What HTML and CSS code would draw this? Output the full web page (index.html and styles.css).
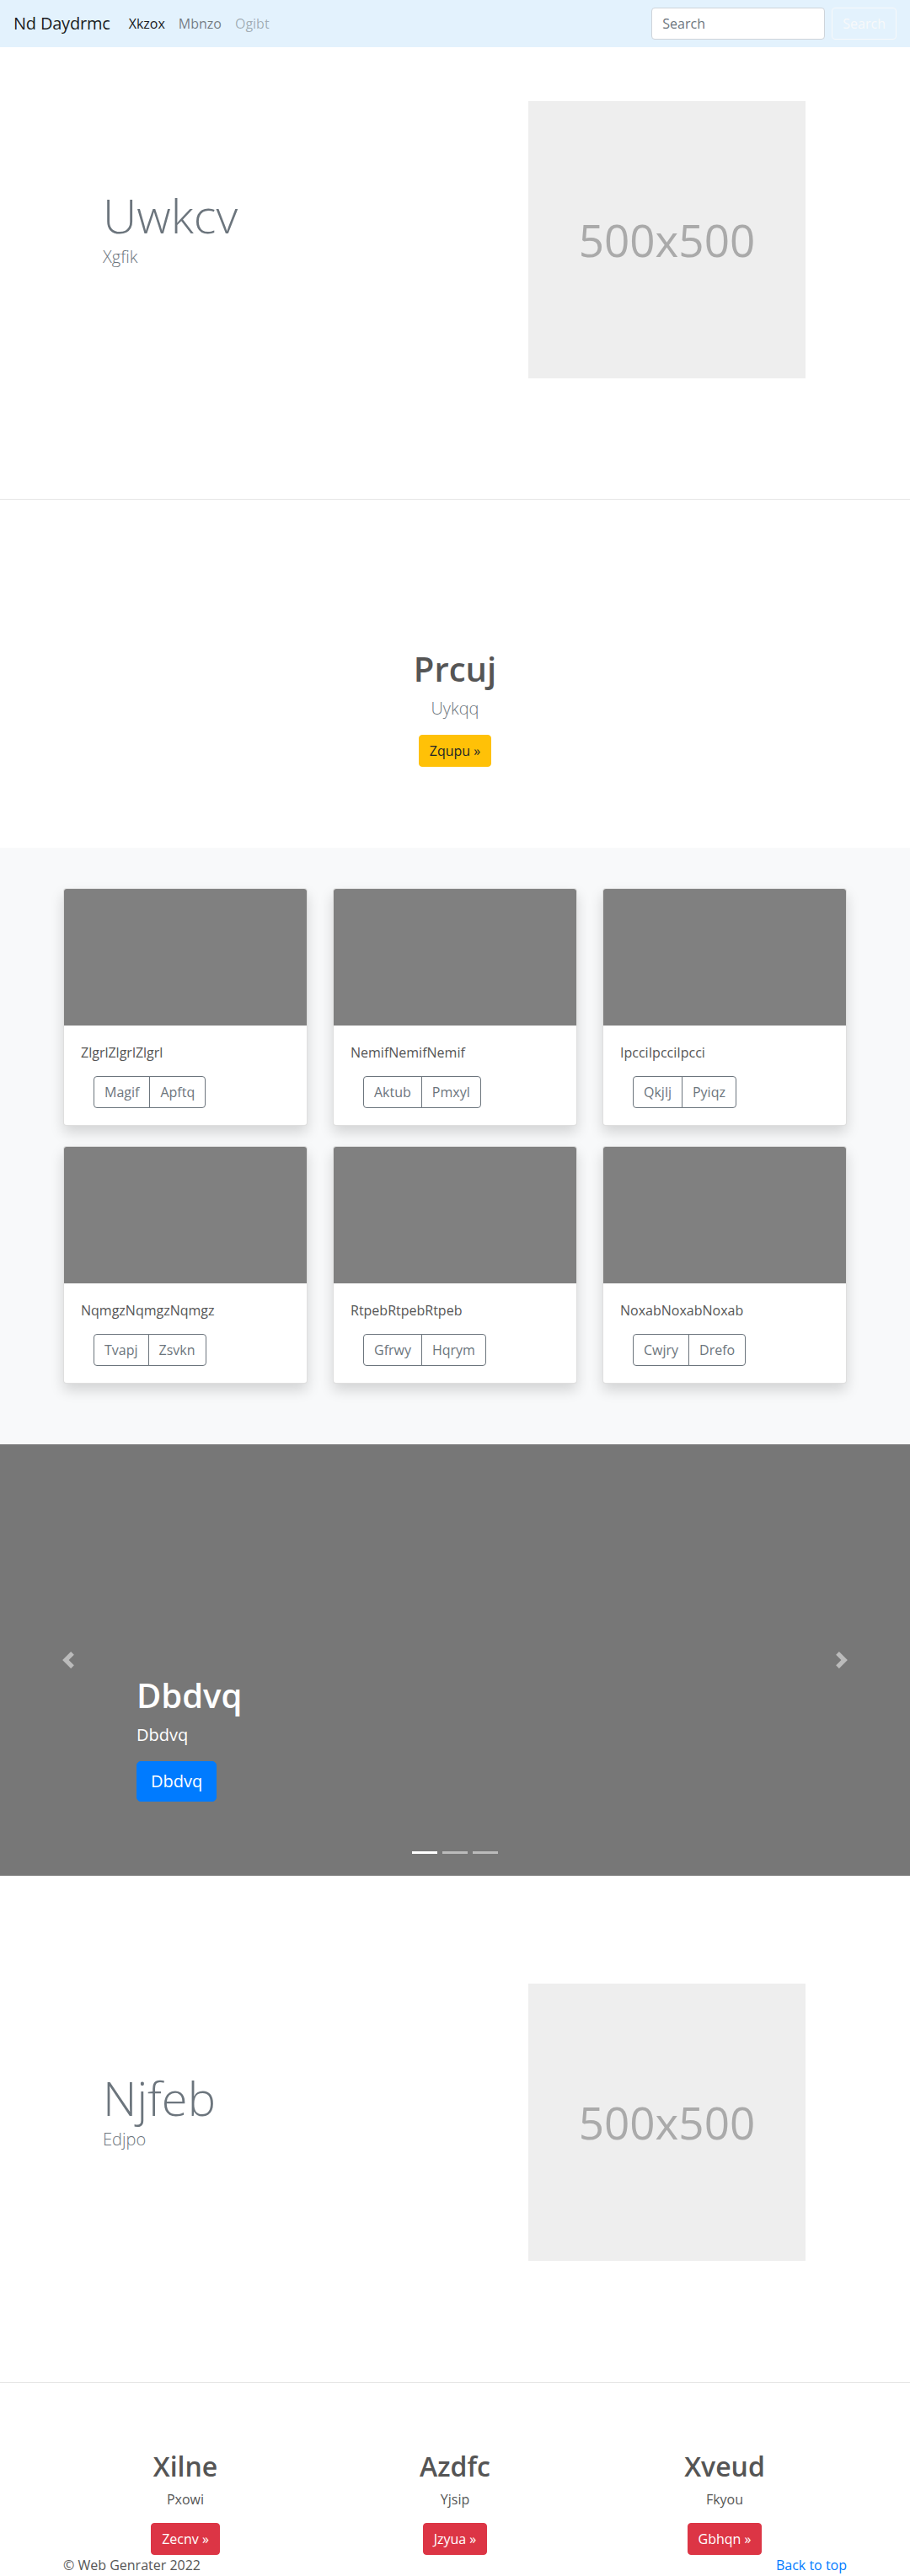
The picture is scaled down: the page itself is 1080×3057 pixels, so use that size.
FILE: index.html
```html
<!DOCTYPE html>
<html lang="en">
<head>
<meta charset="utf-8">
<title>Nd Daydrmc</title>
<link rel="stylesheet" href="styles.css">
</head>
<body>
<nav class="navbar">
  <a class="brand" href="#">Nd Daydrmc</a>
  <ul class="nav-links">
    <li><a class="nav-link active" href="#">Xkzox</a></li>
    <li><a class="nav-link" href="#">Mbnzo</a></li>
    <li><a class="nav-link disabled" href="#">Ogibt</a></li>
  </ul>
  <form class="search">
    <input class="search-input" type="search" placeholder="Search">
    <button class="btn btn-outline-light" type="button">Search</button>
  </form>
</nav>

<section class="feature feature-top">
  <div class="container feature-row">
    <div class="feature-text">
      <h1 class="display">Uwkcv</h1>
      <p class="lead">Xgfik</p>
    </div>
    <div class="placeholder">500x500</div>
  </div>
</section>

<section class="intro">
  <h1 class="intro-title">Prcuj</h1>
  <p class="lead intro-lead">Uykqq</p>
  <a class="btn btn-warning" href="#">Zqupu »</a>
</section>

<section class="album">
  <div class="container card-grid">
    <div class="card">
      <div class="card-img"></div>
      <div class="card-body">
        <p class="card-text">ZlgrlZlgrlZlgrl</p>
        <div class="btn-group"><a class="btn btn-outline" href="#">Magif</a><a class="btn btn-outline" href="#">Apftq</a></div>
      </div>
    </div>
    <div class="card">
      <div class="card-img"></div>
      <div class="card-body">
        <p class="card-text">NemifNemifNemif</p>
        <div class="btn-group"><a class="btn btn-outline" href="#">Aktub</a><a class="btn btn-outline" href="#">Pmxyl</a></div>
      </div>
    </div>
    <div class="card">
      <div class="card-img"></div>
      <div class="card-body">
        <p class="card-text">IpcciIpcciIpcci</p>
        <div class="btn-group"><a class="btn btn-outline" href="#">Qkjlj</a><a class="btn btn-outline" href="#">Pyiqz</a></div>
      </div>
    </div>
    <div class="card">
      <div class="card-img"></div>
      <div class="card-body">
        <p class="card-text">NqmgzNqmgzNqmgz</p>
        <div class="btn-group"><a class="btn btn-outline" href="#">Tvapj</a><a class="btn btn-outline" href="#">Zsvkn</a></div>
      </div>
    </div>
    <div class="card">
      <div class="card-img"></div>
      <div class="card-body">
        <p class="card-text">RtpebRtpebRtpeb</p>
        <div class="btn-group"><a class="btn btn-outline" href="#">Gfrwy</a><a class="btn btn-outline" href="#">Hqrym</a></div>
      </div>
    </div>
    <div class="card">
      <div class="card-img"></div>
      <div class="card-body">
        <p class="card-text">NoxabNoxabNoxab</p>
        <div class="btn-group"><a class="btn btn-outline" href="#">Cwjry</a><a class="btn btn-outline" href="#">Drefo</a></div>
      </div>
    </div>
  </div>
</section>

<section class="carousel">
  <div class="slide">
    <div class="caption">
      <h1 class="caption-title">Dbdvq</h1>
      <p class="caption-text">Dbdvq</p>
      <p class="caption-action"><a class="btn btn-primary btn-lg" href="#">Dbdvq</a></p>
    </div>
  </div>
  <ol class="indicators">
    <li class="active"></li>
    <li></li>
    <li></li>
  </ol>
  <a class="control control-prev" href="#" aria-label="Previous">
    <svg class="control-icon" viewBox="0 0 8 8" width="20" height="20"><path fill="#fff" d="M5.25 0l-4 4 4 4 1.5-1.5L4.25 4l2.5-2.5L5.25 0z"/></svg>
  </a>
  <a class="control control-next" href="#" aria-label="Next">
    <svg class="control-icon" viewBox="0 0 8 8" width="20" height="20"><path fill="#fff" d="M2.75 0l-1.5 1.5L3.75 4l-2.5 2.5L2.75 8l4-4-4-4z"/></svg>
  </a>
</section>

<section class="feature feature-bottom">
  <div class="container feature-row">
    <div class="feature-text">
      <h1 class="display">Njfeb</h1>
      <p class="lead">Edjpo</p>
    </div>
    <div class="placeholder">500x500</div>
  </div>
</section>

<section class="marketing">
  <div class="container marketing-row">
    <div class="market-col">
      <h2 class="market-title">Xilne</h2>
      <p class="market-text">Pxowi</p>
      <p class="market-action"><a class="btn btn-danger" href="#">Zecnv »</a></p>
    </div>
    <div class="market-col">
      <h2 class="market-title">Azdfc</h2>
      <p class="market-text">Yjsip</p>
      <p class="market-action"><a class="btn btn-danger" href="#">Jzyua »</a></p>
    </div>
    <div class="market-col">
      <h2 class="market-title">Xveud</h2>
      <p class="market-text">Fkyou</p>
      <p class="market-action"><a class="btn btn-danger" href="#">Gbhqn »</a></p>
    </div>
  </div>
</section>

<footer class="container footer">
  <p class="copy">© Web Genrater 2022</p>
  <a class="back" href="#">Back to top</a>
</footer>
</body>
</html>
```

FILE: styles.css
```css
* { box-sizing: border-box; }
html, body { margin: 0; padding: 0; }
body {
  font-family: "Open Sans", "Noto Sans", sans-serif;
  font-size: 16px;
  line-height: 1.5;
  color: #555;
  background: #fff;
}
a { text-decoration: none; }
h1, h2, p { margin: 0; }

.container { width: 960px; margin: 0 auto; padding: 0 15px; }

/* navbar */
.navbar {
  display: flex;
  align-items: center;
  height: 56px;
  padding: 8px 16px;
  background: #e3f2fd;
}
.brand {
  font-size: 20px;
  line-height: 30px;
  padding: 5px 0;
  margin-right: 14px;
  color: rgba(0,0,0,.9);
  letter-spacing: -0.2px;
}
.nav-links { display: flex; list-style: none; margin: 0; padding: 0; }
.nav-link { display: block; padding: 8px; color: rgba(0,0,0,.5); }
.nav-link.active { color: rgba(0,0,0,.9); }
.nav-link.disabled { color: rgba(0,0,0,.3); }
.search { margin: 0 0 0 auto; display: flex; align-items: center; }
.search-input {
  width: 206px;
  height: 38px;
  padding: 6px 12px;
  font-family: inherit;
  font-size: 16px;
  color: #495057;
  background: #fff;
  border: 1px solid #ced4da;
  border-radius: 4px;
  margin-right: 8px;
}
.search-input::placeholder { color: #6c757d; opacity: 1; }

/* buttons */
.btn {
  display: inline-block;
  font-family: inherit;
  font-size: 16px;
  font-weight: 400;
  line-height: 24px;
  padding: 6px 12px;
  border: 1px solid transparent;
  border-radius: 4px;
  text-align: center;
  white-space: nowrap;
}
.btn-outline-light { color: #f8f9fa; border-color: #f8f9fa; background: transparent; }
.btn-warning { color: #212529; background: #ffc107; border-color: #ffc107; }
.btn-primary { color: #fff; background: #007bff; border-color: #007bff; }
.btn-danger { color: #fff; background: #dc3545; border-color: #dc3545; }
.btn-lg { font-size: 20px; line-height: 30px; padding: 8px 16px; border-radius: 5px; }
.btn-outline { color: #6c757d; border-color: #6c757d; background: transparent; }

/* feature sections */
.feature { border-bottom: 1px solid #e5e5e5; }
.feature-top { padding: 64px 0 143px; }
.feature-bottom { padding: 128px 0 144px; }
.feature-row { display: flex; align-items: center; }
.feature-text { flex: 1; padding-left: 47px; color: #6c757d; }
.display { font-size: 56px; font-weight: 300; line-height: 1.2; }
.lead { font-size: 20px; font-weight: 300; }
.feature-text .lead { margin-bottom: 27px; }
.placeholder {
  width: 329px;
  height: 329px;
  margin-right: 49px;
  background: #eee;
  color: #aaa;
  font-size: 53px;
  display: flex;
  align-items: center;
  justify-content: center;
}

/* intro */
.intro { padding: 177px 0 96px; text-align: center; }
.intro-title { font-size: 40px; font-weight: 600; line-height: 1.2; margin-bottom: 8px; }
.intro-lead { color: #6c757d; margin-bottom: 16px; }

/* album */
.album { background: #f8f9fa; padding: 48px 0 72px; }
.card-grid {
  display: grid;
  grid-template-columns: repeat(3, 290px);
  column-gap: 30px;
  row-gap: 24px;
}
.card {
  background: #fff;
  border: 1px solid rgba(0,0,0,.125);
  border-radius: 4px;
  box-shadow: 0 8px 16px rgba(0,0,0,.15);
  overflow: hidden;
}
.card-img { height: 162px; background: #808080; }
.card-body { padding: 20px; }
.card-text { margin-bottom: 16px; }
.btn-group { display: inline-flex; margin-left: 15px; }
.btn-group .btn:first-child { border-radius: 4px 0 0 4px; }
.btn-group .btn:last-child { border-radius: 0 4px 4px 0; margin-left: -1px; }

/* carousel */
.carousel { position: relative; height: 512px; background: #777; overflow: hidden; }
.slide {
  height: 512px;
  display: flex;
  align-items: flex-end;
  padding: 0 15% 52px;
}
.caption { padding: 20px 0; color: #fff; }
.caption-title { font-size: 40px; font-weight: 600; line-height: 1.2; margin-bottom: 8px; }
.caption-text { font-size: 20px; margin-bottom: 16px; }
.caption-action { margin-bottom: 16px; }
.indicators {
  position: absolute;
  left: 0;
  right: 0;
  bottom: 0;
  margin: 0 0 16px;
  padding: 0;
  list-style: none;
  display: flex;
  justify-content: center;
}
.indicators li {
  width: 30px;
  height: 3px;
  margin: 0 3px;
  box-sizing: content-box;
  border-top: 10px solid transparent;
  border-bottom: 10px solid transparent;
  background: #fff;
  background-clip: padding-box;
  opacity: .5;
}
.indicators li.active { opacity: 1; }
.control {
  position: absolute;
  top: 0;
  bottom: 0;
  width: 15%;
  display: flex;
  align-items: center;
  justify-content: center;
  opacity: .5;
}
.control-prev { left: 0; }
.control-next { right: 0; }
.control-icon { display: block; width: 20px; height: 20px; }

/* marketing */
.marketing { padding-top: 80px; }
.marketing-row {
  display: grid;
  grid-template-columns: repeat(3, 290px);
  column-gap: 30px;
  text-align: center;
}
.market-title { font-size: 32px; font-weight: 600; line-height: 1.2; margin-bottom: 8px; }
.market-text { margin-bottom: 16px; }

/* footer */
.footer { display: flex; justify-content: space-between; align-items: flex-start; }
.copy { margin: 0; }
.back { color: #007bff; }
```
